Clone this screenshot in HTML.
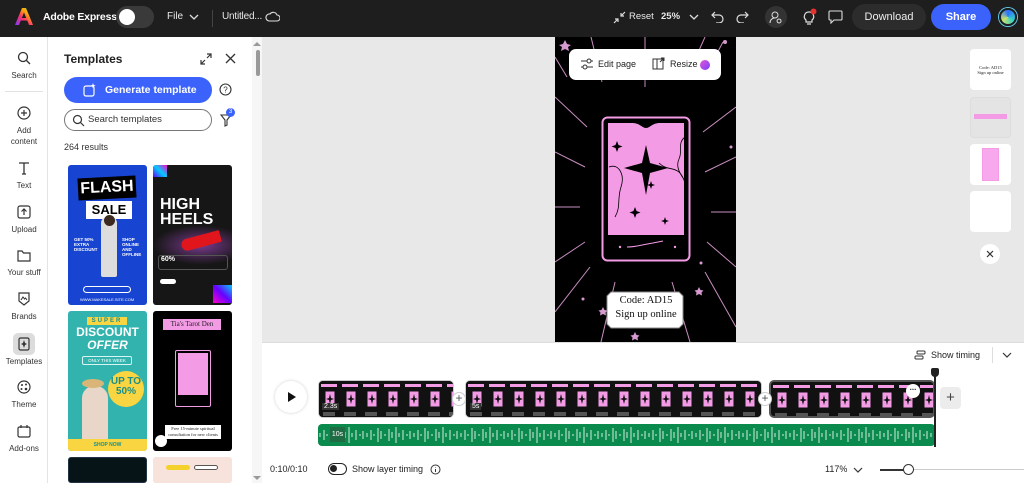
<!DOCTYPE html>
<html><head><meta charset="utf-8"><style>
*{box-sizing:border-box;margin:0;padding:0}
html{width:1024px;height:483px;overflow:hidden}
body{width:1024px;height:483px;overflow:hidden;font-family:"Liberation Sans",sans-serif;background:#e8e8e8;position:relative;color:#222}
.a{position:absolute}
.top{left:0;top:0;width:1024px;height:37px;background:#1e1e1e;color:#fff}
.tw{color:#e8e8e8;font-size:10px}
.rail{left:0;top:37px;width:48px;height:446px;background:#fff;border-right:1px solid #e4e4e4}
.ri{position:absolute;left:0;width:48px;text-align:center;font-size:8px;color:#333;line-height:11px}
.ri svg{display:block;margin:0 auto 5px}
.panel{left:48px;top:37px;width:214px;height:446px;background:#fff;overflow:hidden}
.card{position:absolute;width:79px;height:140px;border-radius:3px;overflow:hidden}
.tl{left:262px;top:342px;width:762px;height:141px;background:#fff;border-top:1px solid #ddd}
.clip{position:absolute;top:380px;height:38px;border-radius:5px;overflow:hidden;background:#111}
.pl{position:absolute;width:14px;height:14px;border-radius:50%;background:#fff;border:1px solid #ccc;font-size:12px;line-height:11px;text-align:center;color:#555}
</style></head><body>
<svg width="0" height="0" style="position:absolute"><defs>
<pattern id="film" width="21" height="38" patternUnits="userSpaceOnUse">
<rect width="21" height="38" fill="#111"/><rect x="2" y="3" width="16" height="3" fill="#f49be6"/>
<rect x="6" y="10" width="10" height="16" fill="#f49be6" stroke="#111" stroke-width="1"/><path d="M11 13l1 4 3 1-3 1-1 4-1-4-3-1 3-1z" fill="#111"/>
<rect x="4" y="31" width="12" height="4" fill="#555"/></pattern>
<pattern id="wave" width="47" height="22" patternUnits="userSpaceOnUse">
<g stroke="#cfeede" stroke-width="1"><line x1="2" y1="9" x2="2" y2="13"/><line x1="6" y1="6" x2="6" y2="16"/><line x1="9" y1="10" x2="9" y2="12"/><line x1="13" y1="4" x2="13" y2="18"/><line x1="16" y1="7" x2="16" y2="15"/><line x1="20" y1="10" x2="20" y2="12"/><line x1="24" y1="5" x2="24" y2="17"/><line x1="27" y1="8" x2="27" y2="14"/><line x1="31" y1="3" x2="31" y2="19"/><line x1="34" y1="9" x2="34" y2="13"/><line x1="38" y1="6" x2="38" y2="16"/><line x1="42" y1="10" x2="42" y2="12"/><line x1="45" y1="7" x2="45" y2="15"/></g></pattern>
</defs></svg>

<div class="a top">
 <svg class="a" style="left:15px;top:8px" width="18" height="17" viewBox="0 0 18 17"><defs><linearGradient id="lg" x1="0" y1="1" x2="1" y2="0"><stop offset="0" stop-color="#7b3cff"/><stop offset=".4" stop-color="#ff2f6d"/><stop offset=".7" stop-color="#ffb100"/><stop offset="1" stop-color="#32c6ff"/></linearGradient></defs><path d="M7 0h4l7 17h-4l-1.7-4.5H5.7L4 17H0zM9 4.5l-2.2 5.5h4.4z" fill="url(#lg)"/></svg>
 <div class="a" style="left:43px;top:11px;font-size:10.5px;font-weight:bold;letter-spacing:-0.2px">Adobe Express</div>
 <div class="a" style="left:116px;top:6px;width:38px;height:22px;border-radius:11px;background:#3a3a3a"></div>
 <div class="a" style="left:119px;top:9px;width:16px;height:16px;border-radius:50%;background:#fff"></div>
 <div class="a tw" style="left:167px;top:11px">File</div>
 <svg class="a" style="left:189px;top:13px" width="10" height="8"><path d="M1 2l4 4 4-4" stroke="#ddd" fill="none" stroke-width="1.3"/></svg>
 <div class="a" style="left:212px;top:10px;width:1px;height:17px;background:#444"></div>
 <div class="a tw" style="left:222px;top:11px;letter-spacing:-0.2px">Untitled...</div>
 <svg class="a" style="left:265px;top:11px" width="15" height="11"><path d="M4 10h8a3 3 0 0 0 0-6 4 4 0 0 0-7-1A3.5 3.5 0 0 0 4 10z" stroke="#ddd" fill="none" stroke-width="1.1"/></svg>
 <svg class="a" style="left:613px;top:11px" width="13" height="13"><path d="M1 12l4-4M2 8h3v3M12 1L8 5M8 2v3h3" stroke="#ddd" fill="none" stroke-width="1.2"/></svg>
 <div class="a tw" style="left:629px;top:11px;font-size:9.5px">Reset</div>
 <div class="a tw" style="left:661px;top:11px;font-size:9.5px;font-weight:bold">25%</div>
 <svg class="a" style="left:689px;top:13px" width="10" height="8"><path d="M1 2l4 4 4-4" stroke="#ddd" fill="none" stroke-width="1.3"/></svg>
 <svg class="a" style="left:711px;top:10px" width="14" height="13"><path d="M4 2L1 5l3 3M1 5h7a4 4 0 0 1 0 8H5" stroke="#ddd" fill="none" stroke-width="1.2"/></svg>
 <svg class="a" style="left:735px;top:10px" width="14" height="13"><path d="M10 2l3 3-3 3M13 5H6a4 4 0 0 0 0 8h3" stroke="#ddd" fill="none" stroke-width="1.2"/></svg>
 <div class="a" style="left:765px;top:6px;width:22px;height:22px;border-radius:50%;background:#333"></div>
 <svg class="a" style="left:769px;top:10px" width="14" height="14"><circle cx="6" cy="5" r="3" stroke="#ddd" fill="none"/><path d="M1 13c0-3 2-5 5-5M10 9a2 2 0 1 0 .1 0" stroke="#ddd" fill="none"/></svg>
 <svg class="a" style="left:802px;top:8px" width="16" height="18"><path d="M7 4a4.5 4.5 0 0 0-3 8v2h6v-2a4.5 4.5 0 0 0-3-8zM5 16h4" stroke="#ddd" fill="none" stroke-width="1.2"/><circle cx="11.5" cy="3.5" r="3" fill="#e5322d"/></svg>
 <svg class="a" style="left:828px;top:10px" width="15" height="14"><path d="M2 1h11a1 1 0 0 1 1 1v7a1 1 0 0 1-1 1H6l-3 3v-3H2a1 1 0 0 1-1-1V2a1 1 0 0 1 1-1z" stroke="#ddd" fill="none" stroke-width="1.1"/></svg>
 <div class="a" style="left:852px;top:4px;width:74px;height:26px;border-radius:13px;background:#2c2c2c;color:#eee;font-size:11px;text-align:center;line-height:26px">Download</div>
 <div class="a" style="left:931px;top:4px;width:60px;height:26px;border-radius:13px;background:#3b63fb;color:#fff;font-size:11px;font-weight:bold;text-align:center;line-height:26px">Share</div>
 <div class="a" style="left:999px;top:8px;width:18px;height:18px;border-radius:50%;background:conic-gradient(#2a6fff,#35d0c7,#c8e36a,#2a6fff);border:2px solid #1e1e1e;box-shadow:0 0 0 1px #6ce"></div>
</div>

<div class="a rail">
 <div class="ri" style="top:14px"><svg width="14" height="14"><circle cx="6" cy="6" r="4.5" stroke="#333" fill="none" stroke-width="1.3"/><path d="M9.5 9.5L13 13" stroke="#333" stroke-width="1.3"/></svg>Search</div>
 <div class="a" style="left:5px;top:54px;width:38px;height:1px;background:#e2e2e2"></div>
 <div class="ri" style="top:69px"><svg width="14" height="14"><circle cx="7" cy="7" r="6" stroke="#333" fill="none" stroke-width="1.2"/><path d="M7 4v6M4 7h6" stroke="#333" stroke-width="1.2"/></svg>Add<br>content</div>
 <div class="ri" style="top:124px"><svg width="14" height="14"><path d="M2 2h10M7 2v11M5 13h4" stroke="#333" stroke-width="1.3" fill="none"/></svg>Text</div>
 <div class="ri" style="top:168px"><svg width="14" height="14"><rect x="1" y="1" width="12" height="12" rx="2" stroke="#333" fill="none" stroke-width="1.2"/><path d="M7 10V4M4.5 6.5L7 4l2.5 2.5" stroke="#333" fill="none" stroke-width="1.2"/></svg>Upload</div>
 <div class="ri" style="top:212px"><svg width="14" height="13"><path d="M1 2h4l1.5 2H13v8H1z" stroke="#333" fill="none" stroke-width="1.2"/></svg>Your stuff</div>
 <div class="ri" style="top:255px"><svg width="14" height="14"><path d="M2 1h10v8l-5 4-5-4z" stroke="#333" fill="none" stroke-width="1.2"/><path d="M4 8l2-3 1.5 2 1-1L10 8" stroke="#333" fill="none"/></svg>Brands</div>
 <div class="a" style="left:13px;top:296px;width:22px;height:22px;border-radius:5px;background:#dcdcdc"></div>
 <div class="ri" style="top:300px"><svg width="14" height="14"><rect x="2" y="1" width="10" height="12" rx="1.5" stroke="#333" fill="none" stroke-width="1.2"/><path d="M7 3l1 3 2 1-2 1-1 3-1-3-2-1 2-1z" fill="#333"/></svg>Templates</div>
 <div class="ri" style="top:343px"><svg width="14" height="14"><circle cx="7" cy="7" r="6" stroke="#333" fill="none" stroke-width="1.2"/><circle cx="5" cy="5" r="1" fill="#333"/><circle cx="9" cy="4.5" r="1" fill="#333"/><circle cx="4.5" cy="9" r="1" fill="#333"/><circle cx="9" cy="9" r="1.3" fill="#333"/></svg>Theme</div>
 <div class="ri" style="top:387px"><svg width="14" height="14"><rect x="1" y="3" width="12" height="10" rx="1.5" stroke="#333" fill="none" stroke-width="1.2"/><path d="M4 1v3M10 1v3" stroke="#333" stroke-width="1.2"/></svg>Add-ons</div>
</div>

<div class="a panel">
 <div class="a" style="left:16px;top:15px;font-size:12px;font-weight:bold;color:#222">Templates</div>
 <svg class="a" style="left:152px;top:16px" width="12" height="12"><path d="M1 11l4-4M1 7v4h4M11 1L7 5M7 1h4v4" stroke="#333" fill="none" stroke-width="1.2"/></svg>
 <svg class="a" style="left:177px;top:16px" width="11" height="11"><path d="M1 1l9 9M10 1l-9 9" stroke="#333" stroke-width="1.3"/></svg>
 <div class="a" style="left:16px;top:40px;width:148px;height:26px;border-radius:13px;background:#3b63fb;color:#fff;font-size:10.5px;font-weight:bold;line-height:26px;padding-left:41px">Generate template</div>
 <svg class="a" style="left:35px;top:46px" width="14" height="14"><rect x="1" y="3" width="10" height="10" rx="2" stroke="#fff" fill="none" stroke-width="1.2"/><path d="M10 0l.7 2 2 .7-2 .7-.7 2-.7-2-2-.7 2-.7z" fill="#fff"/></svg>
 <svg class="a" style="left:171px;top:46px" width="13" height="13"><circle cx="6.5" cy="6.5" r="5.5" stroke="#333" fill="none" stroke-width="1.1"/><text x="6.5" y="9.5" font-size="8" text-anchor="middle" fill="#333" font-family="Liberation Sans">?</text></svg>
 <div class="a" style="left:16px;top:72px;width:148px;height:22px;border-radius:11px;border:1px solid #777;font-size:9.5px;line-height:20px;padding-left:23px;color:#333">Search templates</div>
 <svg class="a" style="left:24px;top:77px" width="13" height="13"><circle cx="5.5" cy="5.5" r="4" stroke="#333" fill="none" stroke-width="1.2"/><path d="M8.5 8.5L12 12" stroke="#333" stroke-width="1.2"/></svg>
 <svg class="a" style="left:172px;top:76px" width="12" height="14"><path d="M1 2h10L7 7v5L5 13V7z" stroke="#333" fill="none" stroke-width="1.1"/></svg>
 <div class="a" style="left:178px;top:71px;width:9px;height:9px;border-radius:50%;background:#3b63fb;color:#fff;font-size:6px;text-align:center;line-height:9px">3</div>
 <div class="a" style="left:16px;top:105px;font-size:9px;color:#333">264 results</div>
 <div class="a" style="left:204px;top:0;width:10px;height:446px;background:#f6f6f6"></div>
 <div class="a" style="left:208px;top:13px;width:4px;height:26px;border-radius:2px;background:#999"></div>
 <svg class="a" style="left:205px;top:4px" width="8" height="6"><path d="M0 5l4-4 4 4z" fill="#999"/></svg>
 <svg class="a" style="left:205px;top:438px" width="8" height="6"><path d="M0 1l4 4 4-4z" fill="#999"/></svg>

 <div class="card" style="left:20px;top:128px;background:#1844d2">
  <div class="a" style="left:10px;top:12px;width:58px;height:22px;background:#000;transform:rotate(-3deg);color:#fff;font-weight:bold;font-size:16px;text-align:center;line-height:22px">FLASH</div>
  <div class="a" style="left:18px;top:36px;width:46px;height:18px;background:#fff;color:#000;font-weight:bold;font-size:13px;text-align:center;line-height:18px">SALE</div>
  <div class="a" style="left:33px;top:52px;width:16px;height:60px;background:#ddd;border-radius:6px 6px 2px 2px"></div>
  <div class="a" style="left:36px;top:50px;width:11px;height:11px;border-radius:50%;background:#3a2a20"></div>
  <div class="a" style="left:6px;top:72px;color:#fff;font-size:4.5px;font-weight:bold;line-height:5px">GET 50%<br>EXTRA<br>DISCOUNT</div>
  <div class="a" style="left:54px;top:72px;color:#fff;font-size:4.5px;font-weight:bold;line-height:5px">SHOP<br>ONLINE AND<br>OFFLINE</div>
  <div class="a" style="left:15px;top:121px;width:48px;height:7px;border:1px solid #fff;border-radius:4px"></div>
  <div class="a" style="left:12px;top:132px;color:#fff;font-size:4px">WWW.MAKESALE.SITE.COM</div>
 </div>
 <div class="card" style="left:105px;top:128px;background:#161616">
  <div class="a" style="left:0;top:60px;width:79px;height:40px;background:radial-gradient(ellipse at 60% 50%,#7a3a90,transparent 70%)"></div>
  <div class="a" style="left:7px;top:32px;color:#fff;font-weight:bold;font-size:16px;line-height:15px">HIGH<br>HEELS</div>
  <div class="a" style="left:28px;top:70px;width:40px;height:12px;background:#e0161c;border-radius:10px 2px 2px 10px;transform:rotate(-15deg)"></div>
  <div class="a" style="left:5px;top:90px;width:70px;height:15px;border:1px solid #555;border-radius:3px;color:#fff;font-size:7px;font-weight:bold;padding-left:2px">60%</div>
  <div class="a" style="left:7px;top:114px;width:16px;height:5px;background:#fff;border-radius:3px"></div>
  <div class="a" style="left:0;top:0;width:14px;height:12px;background:linear-gradient(45deg,#60f,#0cf,#f0c)"></div>
  <div class="a" style="left:60px;top:120px;width:19px;height:18px;background:linear-gradient(45deg,#f0c,#60f,#0cf)"></div>
 </div>
 <div class="card" style="left:20px;top:274px;background:#32b3ad">
  <div class="a" style="left:19px;top:6px;width:40px;height:8px;background:#f8d541;color:#1a8f8a;font-size:6px;font-weight:bold;text-align:center;line-height:8px;letter-spacing:2px">SUPER</div>
  <div class="a" style="left:0;top:15px;width:79px;text-align:center;color:#fff;font-weight:bold;font-size:12px;line-height:13px">DISCOUNT<br><i>OFFER</i></div>
  <div class="a" style="left:14px;top:45px;width:50px;height:9px;border:1px solid #d6f5f3;border-radius:2px;color:#fff;font-size:4.5px;text-align:center;line-height:7px">ONLY THIS WEEK</div>
  <div class="a" style="left:40px;top:60px;width:36px;height:36px;border-radius:50%;background:#f8d541;color:#1a8f8a;font-weight:bold;font-size:10px;text-align:center;padding-top:6px;line-height:10px">UP TO<br>50%</div>
  <div class="a" style="left:14px;top:75px;width:26px;height:58px;background:#e8d6c8;border-radius:12px 12px 0 0"></div>
  <div class="a" style="left:14px;top:68px;width:22px;height:9px;background:#d9b577;border-radius:50%"></div>
  <div class="a" style="left:0;top:128px;width:79px;height:12px;background:#f8d541;color:#1a8f8a;font-size:5px;font-weight:bold;text-align:center;line-height:12px">SHOP NOW</div>
 </div>
 <div class="card" style="left:105px;top:274px;background:#000">
  <div class="a" style="left:10px;top:8px;width:58px;height:11px;background:#f49be6;color:#222;font-family:'Liberation Serif';font-size:7px;text-align:center;line-height:11px">Tia's Tarot Den</div>
  <div class="a" style="left:22px;top:39px;width:36px;height:57px;border:1px solid #f49be6;border-radius:2px;padding:2px"><div style="width:100%;height:42px;background:#f49be6"></div></div>
  <div class="a" style="left:12px;top:114px;width:56px;height:14px;background:#fff;color:#222;font-family:'Liberation Serif';font-size:4.5px;text-align:center;line-height:6px;padding-top:1px">Free 15-minute spiritual consultation for new clients</div>
  <div class="a" style="left:2px;top:124px;width:12px;height:12px;border-radius:50%;background:#fff"></div>
 </div>
 <div class="card" style="left:20px;top:420px;height:26px;background:#061418;border:1px solid #234"></div>
 <div class="card" style="left:105px;top:420px;height:26px;background:#f8e2dc">
  <div class="a" style="left:13px;top:8px;width:24px;height:5px;background:#f5d22b;border-radius:3px"></div>
  <div class="a" style="left:41px;top:8px;width:24px;height:5px;background:#fff;border:1px solid #555;border-radius:3px"></div>
 </div>
</div>

<svg class="a" style="left:555px;top:37px" width="181" height="305" viewBox="0 0 181 305">
 <rect width="181" height="305" fill="#000"/>
 <g stroke="#c98fc0" stroke-width="1">
  <line x1="90" y1="0" x2="90" y2="50"/><line x1="36" y1="0" x2="47" y2="45"/><line x1="150" y1="0" x2="132" y2="40"/>
  <line x1="0" y1="60" x2="32" y2="90"/><line x1="181" y1="70" x2="148" y2="95"/><line x1="0" y1="115" x2="30" y2="130"/>
  <line x1="181" y1="120" x2="150" y2="135"/><line x1="0" y1="170" x2="25" y2="170"/><line x1="181" y1="175" x2="156" y2="175"/>
  <line x1="0" y1="225" x2="30" y2="205"/><line x1="181" y1="230" x2="152" y2="205"/><line x1="0" y1="275" x2="35" y2="230"/>
  <line x1="181" y1="290" x2="150" y2="235"/><line x1="46" y1="305" x2="60" y2="245"/><line x1="135" y1="305" x2="117" y2="245"/>
  <line x1="0" y1="20" x2="12" y2="40"/><line x1="168" y1="5" x2="160" y2="20"/>
 </g>
 <g fill="#d79ad0"><path d="M10 3l2 4 4 1-3 2 1 4-4-2-4 2 1-4-3-2 4-1z"/><path d="M48 270l1.5 3 3 .5-2 2 .5 3-3-1.5-3 1.5.5-3-2-2 3-.5z"/><path d="M80 295l1.5 3 3 .5-2 2 .5 3-3-1.5-3 1.5.5-3-2-2 3-.5z"/><path d="M144 250l1.5 3 3 .5-2 2 .5 3-3-1.5-3 1.5.5-3-2-2 3-.5z"/><circle cx="170" cy="5" r="2"/><circle cx="176" cy="110" r="1.5"/><circle cx="146" cy="226" r="1.5"/><circle cx="28" cy="262" r="1.5"/></g>
 <rect x="47.5" y="80.5" width="87" height="143" rx="5" fill="none" stroke="#f49be6" stroke-width="2"/>
 <path d="M53 86h24c8 0 10 5 14 5s6-5 14-5h24v112H53z" fill="#f49be6"/>
 <path d="M91 108l4 18 18 5-18 5-4 22-4-22-18-5 18-5z" fill="#000"/>
 <path d="M62 104l1.5 4 4 1.5-4 1.5-1.5 4-1.5-4-4-1.5 4-1.5zM80 170l1.5 4 4 1.5-4 1.5-1.5 4-1.5-4-4-1.5 4-1.5zM110 180l1 3 3 1-3 1-1 3-1-3-3-1 3-1zM96 144l1 3 3 1-3 1-1 3-1-3-3-1 3-1z" fill="#000"/>
 <path d="M54 130c10-4 16 8 12 20s0 20-6 30M130 100c-8 6-2 14-6 22s2 16 6 22M104 126c10 10 20 0 26 20" stroke="#000" fill="none" stroke-width="0.8"/>
 <path d="M72 210c10 0 18-3 26-4l10-2" stroke="#f49be6" fill="none" stroke-width="1"/>
 <circle cx="65" cy="210" r="1.2" fill="#f49be6"/><circle cx="120" cy="210" r="1.2" fill="#f49be6"/>
 <path d="M56 255h68l4 4v28l-4 4H56l-4-4v-28z" fill="#fff" stroke="#888"/>
</svg>
<div class="a" style="left:606px;top:294px;width:80px;text-align:center;font-family:'Liberation Serif';font-size:10.5px;line-height:14px;color:#111">Code: AD15<br>Sign up online</div>

<div class="a" style="left:569px;top:49px;width:152px;height:31px;background:#fff;border-radius:7px;box-shadow:0 1px 3px rgba(0,0,0,.2)"></div>
<svg class="a" style="left:580px;top:58px" width="14" height="12"><path d="M1 3h12M1 9h12" stroke="#333"/><circle cx="9" cy="3" r="2" fill="#fff" stroke="#333"/><circle cx="5" cy="9" r="2" fill="#fff" stroke="#333"/></svg>
<div class="a" style="left:598px;top:59px;font-size:9px;color:#222">Edit page</div>
<svg class="a" style="left:652px;top:57px" width="13" height="13"><rect x="1" y="2" width="10" height="10" stroke="#333" fill="none"/><path d="M5 2v10M8 5l4-4M9 1h3v3" stroke="#333" fill="none"/></svg>
<div class="a" style="left:670px;top:59px;font-size:9px;color:#222">Resize</div>
<div class="a" style="left:700px;top:60px;width:10px;height:10px;border-radius:50%;background:linear-gradient(135deg,#e05ad0,#7b3cff)"></div>

<div class="a" style="left:970px;top:49px;width:41px;height:41px;background:#fff;border-radius:4px;font-family:'Liberation Serif';font-size:4.5px;text-align:center;padding-top:16px;line-height:5px">Code: AD15<br>Sign up online</div>
<div class="a" style="left:970px;top:97px;width:41px;height:41px;background:#e4e4e4;border-radius:4px;border:1px solid #ddd"><div style="margin:16px 3px 0;height:5px;background:#f49be6"></div></div>
<div class="a" style="left:970px;top:144px;width:41px;height:41px;background:#fff;border-radius:4px"><div style="margin:4px 0 0 12px;width:17px;height:33px;background:#f8a8ec;border:1px solid #f49be6"></div></div>
<div class="a" style="left:970px;top:191px;width:41px;height:41px;background:#fff;border-radius:4px"></div>
<div class="a" style="left:980px;top:244px;width:20px;height:20px;background:#fff;border-radius:50%"></div>
<svg class="a" style="left:986px;top:250px" width="8" height="8"><path d="M1 1l6 6M7 1L1 7" stroke="#333" stroke-width="1.2"/></svg>

<div class="a tl"></div>
<svg class="a" style="left:914px;top:350px" width="12" height="11"><rect x="3" y="1" width="8" height="3" rx="1" stroke="#333" fill="none"/><rect x="1" y="6" width="8" height="3" rx="1" stroke="#333" fill="none"/></svg>
<div class="a" style="left:931px;top:350px;font-size:9px;color:#222">Show timing</div>
<div class="a" style="left:992px;top:347px;width:1px;height:16px;background:#ddd"></div>
<svg class="a" style="left:1002px;top:351px" width="10" height="8"><path d="M1 2l4 4 4-4" stroke="#333" fill="none" stroke-width="1.2"/></svg>
<div class="a" style="left:275px;top:381px;width:32px;height:32px;border-radius:50%;background:#fff;box-shadow:0 0 3px rgba(0,0,0,.2)"></div>
<svg class="a" style="left:287px;top:391px" width="10" height="12"><path d="M1 1l8 5-8 5z" fill="#111"/></svg>
<div class="clip" style="left:318px;width:136px;border:1px solid #ccc"><svg width="136" height="38"><rect width="136" height="38" fill="url(#film)"/></svg></div>
<div class="clip" style="left:465px;width:297px;border:1px solid #ccc"><svg width="297" height="38"><rect width="297" height="38" fill="url(#film)"/></svg></div>
<div class="clip" style="left:769px;width:166px;border:2px solid #555"><svg width="166" height="38"><rect width="166" height="38" fill="url(#film)"/></svg></div>
<div class="a" style="left:322px;top:403px;font-size:7px;color:#fff;background:#333;padding:0 2px">2.3s</div>
<div class="a" style="left:470px;top:403px;font-size:7px;color:#fff;background:#333;padding:0 2px">5s</div>
<div class="pl" style="left:452px;top:392px">+</div>
<div class="pl" style="left:758px;top:392px">+</div>
<div class="a" style="left:906px;top:384px;width:14px;height:14px;border-radius:50%;background:#fff;font-size:8px;text-align:center;line-height:8px;font-weight:bold">...</div>
<div class="a" style="left:940px;top:387px;width:21px;height:22px;border-radius:4px;background:#ececec;color:#444;text-align:center;font-size:15px;line-height:21px">+</div>
<div class="a" style="left:318px;top:424px;width:617px;height:22px;border-radius:4px;background:#0b8a4e;overflow:hidden"><svg width="617" height="22"><rect width="617" height="22" fill="url(#wave)"/></svg></div>
<div class="a" style="left:330px;top:427px;width:15px;height:15px;background:#1f6b43;color:#fff;font-size:7px;line-height:15px;text-align:center">10s</div>
<div class="a" style="left:934px;top:370px;width:2px;height:77px;background:#222"></div>
<div class="a" style="left:931px;top:368px;width:8px;height:9px;background:#222;border-radius:2px 2px 4px 4px"></div>
<div class="a" style="left:270px;top:464px;font-size:9px;color:#222">0:10/0:10</div>
<div class="a" style="left:328px;top:463px;width:19px;height:12px;border-radius:6px;border:1.5px solid #222"><div style="margin:1px;width:7px;height:7px;border-radius:50%;background:#222"></div></div>
<div class="a" style="left:352px;top:464px;font-size:9px;color:#222">Show layer timing</div>
<svg class="a" style="left:430px;top:464px" width="11" height="11"><circle cx="5.5" cy="5.5" r="4.5" stroke="#333" fill="none"/><path d="M5.5 5v3M5.5 3v.5" stroke="#333"/></svg>
<div class="a" style="left:825px;top:464px;font-size:9px;color:#222">117%</div>
<svg class="a" style="left:853px;top:466px" width="10" height="8"><path d="M1 2l4 4 4-4" stroke="#333" fill="none" stroke-width="1.2"/></svg>
<div class="a" style="left:880px;top:469px;width:24px;height:1.5px;background:#333"></div>
<div class="a" style="left:912px;top:469px;width:112px;height:1px;background:#ccc"></div>
<div class="a" style="left:903px;top:464px;width:11px;height:11px;border-radius:50%;border:1.5px solid #333;background:#fff"></div>
</body></html>
